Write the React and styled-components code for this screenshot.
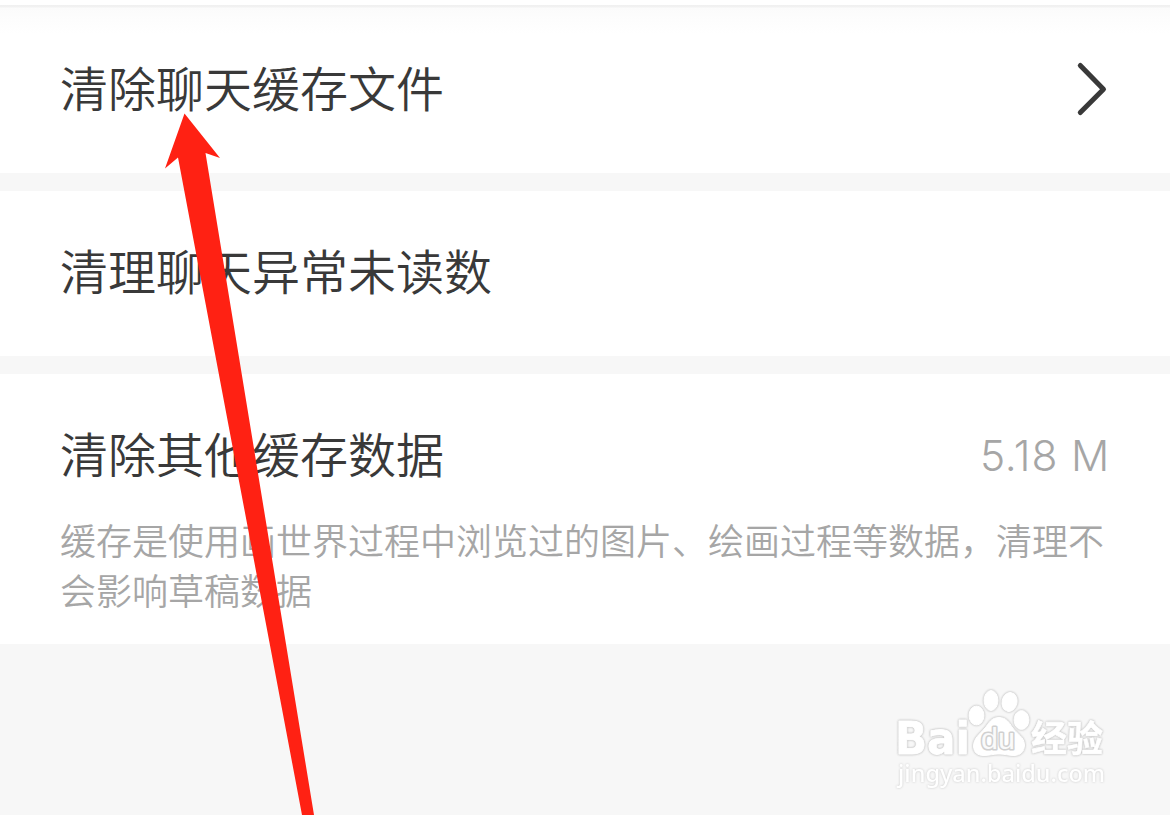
import React from "react";
import styled, { createGlobalStyle } from "styled-components";

const GlobalStyle = createGlobalStyle`
  body {
    margin: 0;
    background: #f7f7f7;
    font-family: "Noto Sans CJK SC", sans-serif;
  }
`

const Page = styled.main`
  position: relative;
  height: 815px;
  overflow: hidden;
  display: flex;
  flex-direction: column;
  gap: 18px;
  background: #f7f7f7;
`

const Section = styled.section`
  box-sizing: border-box;
  height: ${p => p.$height}px;
  padding: ${p => p.$top}px 62px 0 60px;
  background: #fff;
`

const FirstSection = styled(Section)`
  background: linear-gradient(#fff 5px, #f0f0f0 5px, #f2f2f2 7px, #fbfbfb 8px, #fdfdfd 20px, #fff 34px);
`

const Row = styled.div`
  display: flex;
  justify-content: space-between;
  align-items: center;
  height: 70px;
`

const Title = styled.h2`
  margin: 0;
  color: #393939;
  font-size: 48px;
  font-weight: 350;
  line-height: 70px;
  white-space: nowrap;
`

const Size = styled.span`
  padding-top: 8px;
  margin-right: -2px;
  color: #a6a6a6;
  font-family: Inter, sans-serif;
  font-size: 42.5px;
  font-weight: 340;
  line-height: 70px;
  letter-spacing: 0.8px;
  white-space: pre;
`

const Note = styled.p`
  margin: 27px 0 0;
  width: 1050px;
  color: #a6a6a6;
  font-size: 36px;
  font-weight: 350;
  line-height: 50px;
  white-space: nowrap;
`

const Chevron = styled.svg`
  width: 34px;
  height: 56px;
  margin: 6px -1px 0 0;
  fill: none;
  stroke: #393939;
  stroke-width: 5;
  stroke-linecap: round;
  stroke-linejoin: round;
`

const Arrow = styled.svg`
  position: absolute;
  left: 164px;
  top: 113px;
  fill: #ff2113;
`

const Watermark = styled.svg`
  position: absolute;
  left: 890px;
  top: 680px;
  fill: #fff;
  stroke: #fff;
  stroke-linejoin: round;
`

const Mark = styled.g`
  filter: drop-shadow(0 0 0.8px #c0c0c0) drop-shadow(0 0 0.5px #d8d8d8);
`

const Brand = styled.text`
  font-family: "DejaVu Sans", sans-serif;
  font-size: 45px;
  font-weight: 700;
  stroke-width: 0.8;
`

const BrandInner = styled.text`
  font-family: "Liberation Sans", sans-serif;
  font-size: 29px;
  fill: #fafafa;
  stroke: #d0d0d0;
  stroke-width: 3;
  paint-order: stroke;
`

const BrandSuffix = styled.text`
  font-family: "Noto Sans CJK SC", sans-serif;
  font-size: 36px;
  font-weight: 700;
  stroke-width: 0.6;
`

const Site = styled.text`
  font-family: "Noto Sans", sans-serif;
  font-size: 24px;
  font-weight: 500;
  stroke-width: 0;
  filter: drop-shadow(0 0 1px #c8c8c8);
`

export default function App() {
  return (
    <>
      <GlobalStyle />
      <Page>
        <FirstSection $height={173} $top={51}>
          <Row>
            <Title>清除聊天缓存文件</Title>
            <Chevron viewBox="0 0 34 56">
              <path d="M5.3 4.5 L28.5 28.3 L5.3 51.5" />
            </Chevron>
          </Row>
        </FirstSection>

        <Section $height={165} $top={43}>
          <Row>
            <Title>清理聊天异常未读数</Title>
          </Row>
        </Section>

        <Section $height={270} $top={43}>
          <Row>
            <Title>清除其他缓存数据</Title>
            <Size>5.18 M</Size>
          </Row>
          <Note>
            缓存是使用画世界过程中浏览过的图片、绘画过程等数据，清理不
            <br />
            会影响草稿数据
          </Note>
        </Section>

        <Watermark width="230" height="120" viewBox="0 0 230 120">
          <Mark>
            <Brand x="5" y="74" textLength="75" lengthAdjust="spacingAndGlyphs">Bai</Brand>
            <ellipse cx="86.5" cy="35.5" rx="7.5" ry="9.5" />
            <ellipse cx="101" cy="20.5" rx="7" ry="10" />
            <ellipse cx="119.5" cy="22" rx="7.5" ry="9.5" transform="rotate(12 119.5 22)" />
            <ellipse cx="131.5" cy="40" rx="7.5" ry="9.5" />
            <path d="M109 37.5 C101 37.5 99 43 95 48 C90 54 83.5 58 83.5 66 C83.5 73 88 75.5 94 75.5 C100 75.5 103 74 109 74 C115 74 118 75.5 124 75.5 C130 75.5 134.5 72 134.5 65 C134.5 57 127 54 122 47 C119 42 116 37.5 109 37.5 Z" />
            <BrandSuffix x="141" y="72" textLength="72" lengthAdjust="spacingAndGlyphs">经验</BrandSuffix>
          </Mark>
          <BrandInner x="91" y="69" textLength="34" lengthAdjust="spacingAndGlyphs">du</BrandInner>
          <Site x="8" y="102" textLength="207" lengthAdjust="spacingAndGlyphs">jingyan.baidu.com</Site>
        </Watermark>

        <Arrow width="152" height="702" viewBox="164 113 152 702">
          <path d="M184.5 113.5 L220 158 L205.5 153 L314 815 L302 815 L178 157.5 L165 168.5 Z" />
        </Arrow>
      </Page>
    </>
  );
}
